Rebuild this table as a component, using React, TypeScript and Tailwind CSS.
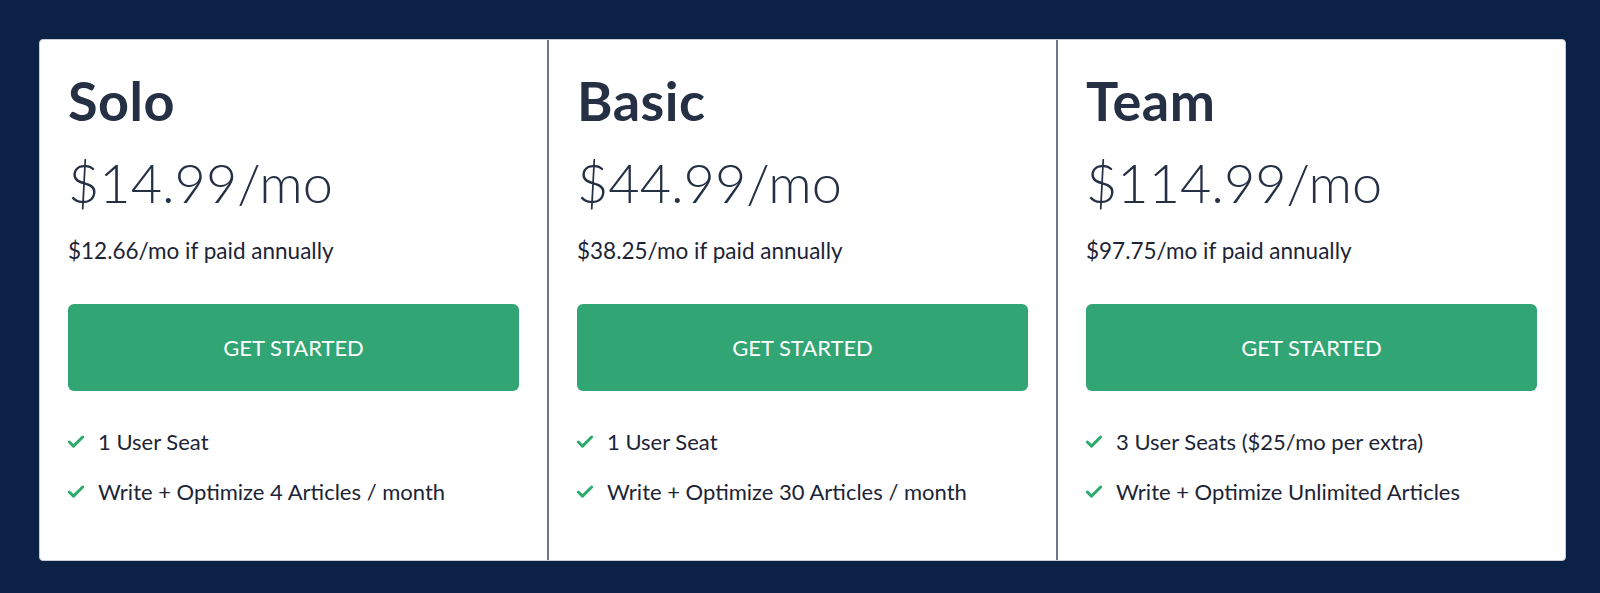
import { Check } from 'lucide-react';

type Plan = {
  name: string;
  price: string;
  annual: string;
  features: string[];
};

const plans: Plan[] = [
  {
    name: 'Solo',
    price: '$14.99/mo',
    annual: '$12.66/mo if paid annually',
    features: ['1 User Seat', 'Write + Optimize 4 Articles / month'],
  },
  {
    name: 'Basic',
    price: '$44.99/mo',
    annual: '$38.25/mo if paid annually',
    features: ['1 User Seat', 'Write + Optimize 30 Articles / month'],
  },
  {
    name: 'Team',
    price: '$114.99/mo',
    annual: '$97.75/mo if paid annually',
    features: ['3 User Seats ($25/mo per extra)', 'Write + Optimize Unlimited Articles'],
  },
];

function PlanColumn({ plan, last }: { plan: Plan; last: boolean }) {
  return (
    <div
      className={`flex-1 flex flex-col px-[28px] pt-[31px] ${
        last ? '' : 'border-r-2 border-[#6f7689]'
      }`}
    >
      <h2 className="font-['Lato',sans-serif] font-bold text-[54px] leading-[60px] tracking-[0.5px] text-[#253045]">
        {plan.name}
      </h2>
      <p className="mt-[17px] font-['Lato',sans-serif] font-light text-[54px] leading-[70px] text-[#253045]">
        {plan.price}
      </p>
      <p className="mt-[18px] font-['Lato',sans-serif] text-[22.5px] leading-[30px] text-[#1c2436]">
        {plan.annual}
      </p>
      <button className="mt-[38px] h-[87px] w-full rounded-[6px] bg-[#31a574] font-['Lato',sans-serif] text-[22px] text-white">
        GET STARTED
      </button>
      <ul className="mt-[36px] flex flex-col gap-[20px]">
        {plan.features.map((f) => (
          <li
            key={f}
            className="flex items-center gap-[12px] font-['Lato',sans-serif] text-[22px] leading-[30px] text-[#1c2436]"
          >
            <Check className="w-[20px] h-[20px] text-[#2eab6c] -ml-[2px]" strokeWidth={3.6} />
            {f}
          </li>
        ))}
      </ul>
    </div>
  );
}

export default function App() {
  return (
    <div className="min-h-screen bg-[#0b2145] pl-[39px] pr-[34px] pt-[39px] pb-[32px]">
      <div className="flex h-[522px] rounded-[4px] bg-white border border-[#c9ccd3] overflow-hidden">
        {plans.map((p, i) => (
          <PlanColumn key={p.name} plan={p} last={i === plans.length - 1} />
        ))}
      </div>
    </div>
  );
}
